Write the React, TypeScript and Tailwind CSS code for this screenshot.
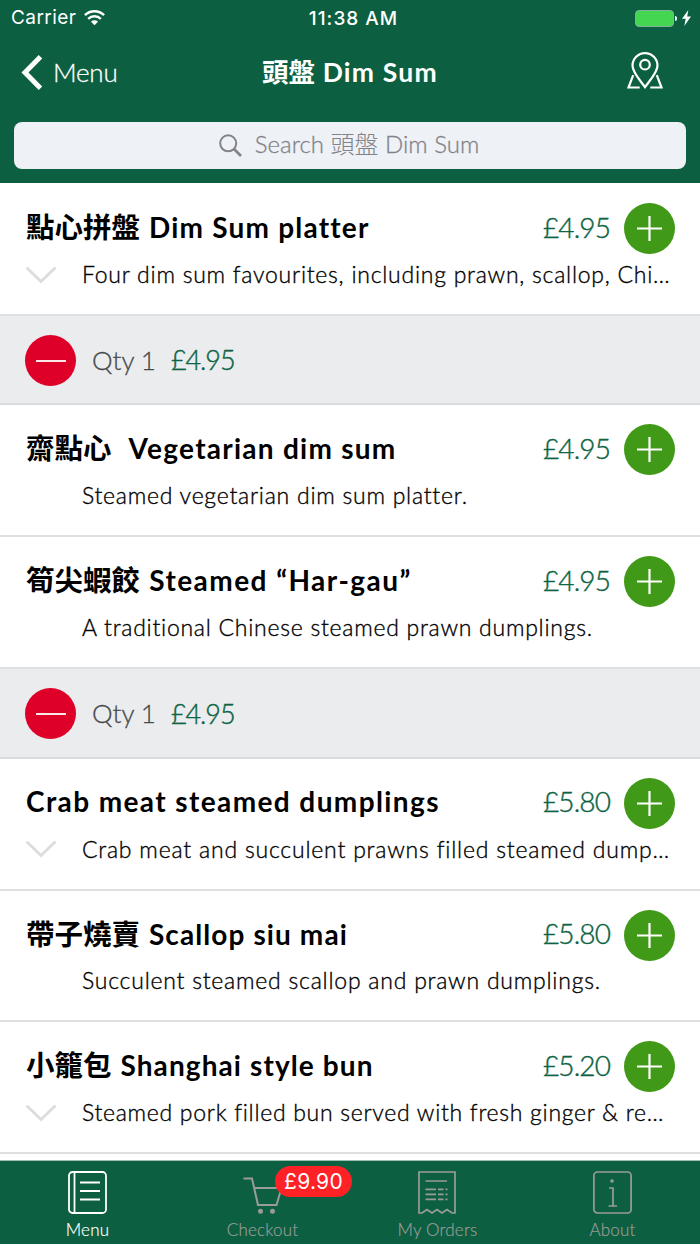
import React from 'react';
import { clsx } from 'clsx';

type Dish = {
  han?: string;
  name: string;
  nameClass: string;
  description: string;
  descriptionClass: string;
  price: string;
  expandable?: boolean;
  qty?: number;
};

const dishes: Dish[] = [
  {
    han: '點心拼盤',
    name: ' Dim Sum platter',
    nameClass: 'tracking-[1.2px]',
    description: 'Four dim sum favourites, including prawn, scallop, Chi…',
    descriptionClass: 'tracking-[0.75px]',
    price: '£4.95',
    expandable: true,
    qty: 1,
  },
  {
    han: '齋點心',
    name: '  Vegetarian dim sum',
    nameClass: 'tracking-[1.25px]',
    description: 'Steamed vegetarian dim sum platter.',
    descriptionClass: 'tracking-[0.75px]',
    price: '£4.95',
  },
  {
    han: '筍尖蝦餃',
    name: ' Steamed “Har-gau”',
    nameClass: 'tracking-[1.45px]',
    description: 'A traditional Chinese steamed prawn dumplings.',
    descriptionClass: 'tracking-[0.74px]',
    price: '£4.95',
    qty: 1,
  },
  {
    name: 'Crab meat steamed dumplings',
    nameClass: 'tracking-[1.4px]',
    description: 'Crab meat and succulent prawns filled steamed dump…',
    descriptionClass: 'tracking-[0.8px]',
    price: '£5.80',
    expandable: true,
  },
  {
    han: '帶子燒賣',
    name: ' Scallop siu mai',
    nameClass: 'tracking-[1.1px]',
    description: 'Succulent steamed scallop and prawn dumplings.',
    descriptionClass: 'tracking-[0.77px]',
    price: '£5.80',
  },
  {
    han: '小籠包',
    name: ' Shanghai style bun',
    nameClass: 'tracking-[1.1px]',
    description: 'Steamed pork filled bun served with fresh ginger & re…',
    descriptionClass: 'tracking-[0.71px]',
    price: '£5.20',
    expandable: true,
  },
];

const StatusBar = () => (
  <div className="grid h-9 grid-cols-3 items-center font-['Inter'] text-[19px] leading-none">
    <div className="flex items-center gap-2 pb-px pl-[11px]">
      <span className="tracking-[0.45px]">Carrier</span>
      <svg className="h-4 w-[21px]" viewBox="0 0 21 16" fill="none" stroke="currentColor" strokeWidth="2.4">
        <path d="M0.9 5.2a13.6 13.6 0 0 1 19.2 0" />
        <path d="M4.2 8.8a9 9 0 0 1 12.6 0" />
        <path d="M10.5 15.2 7 11.7a5 5 0 0 1 7 0z" fill="currentColor" stroke="none" />
      </svg>
    </div>
    <span className="pl-[7px] text-center font-medium tracking-[1px]">11:38 AM</span>
    <div className="flex items-center justify-end pr-[9px]">
      <div className="h-[17px] w-[39px] rounded-[4px] border border-[#7fb29d] bg-[#45d651]" />
      <div className="ml-px h-[5px] w-[2px] rounded-r-sm bg-white" />
      <svg className="ml-[5px] h-4 w-[9px]" viewBox="0 0 9 16" fill="currentColor">
        <path d="M6.3 0 0 8.8h3.7L2.3 16 9 6.5H5.2z" />
      </svg>
    </div>
  </div>
);

const NavBar = () => (
  <div className="grid h-[73px] grid-cols-3 items-center">
    <div className="flex items-center gap-[11px] pb-px pl-[21px]">
      <svg className="h-[35px] w-[21px]" viewBox="0 0 21 35" fill="none" stroke="currentColor" strokeWidth="5">
        <path d="M19.5 1.8 4 17.5l15.5 15.7" />
      </svg>
      <span className="text-[26px] font-light tracking-[-0.2px] [-webkit-text-stroke:0.3px]">Menu</span>
    </div>
    <h1 className="pb-0.5 text-center text-[26.5px] font-bold tracking-[1.2px] whitespace-nowrap">
      <span className="font-['Noto_Sans_CJK_TC',sans-serif] tracking-normal">頭盤</span> Dim Sum
    </h1>
    <div className="flex justify-end pr-[37px] pb-[4px]">
      <svg className="h-[37px] w-9" viewBox="0 0 36 37" fill="none" stroke="currentColor" strokeWidth="2.2">
        <path d="M18 35.2C12.5 27.5 5.5 20.5 5.5 13.6a12.5 12.5 0 0 1 25 0c0 6.9-7 13.9-12.5 21.6z" />
        <circle cx="18" cy="12.7" r="4.8" />
        <path d="M6.2 23.2 1.5 35.5h11.2M29.8 23.2l4.7 12.3H23.3" />
      </svg>
    </div>
  </div>
);

const SearchField = () => (
  <div className="mx-[14px] mt-[13px] flex h-[47px] items-center justify-center rounded-lg bg-[#eef1f6] pr-0.5 text-[#828388]">
    <svg className="mr-[13px] h-[23px] w-[23px]" viewBox="0 0 23 23" fill="none" stroke="currentColor" strokeWidth="2">
      <circle cx="9.2" cy="9.3" r="8" />
      <path d="m15 15 7 7" strokeWidth="2.6" />
    </svg>
    <span className="pb-1 text-[24px] font-light [-webkit-text-stroke:0.3px]">
      Search <span className="font-['Noto_Sans_CJK_TC',sans-serif] [-webkit-text-stroke:0px]">頭盤</span> Dim Sum
    </span>
  </div>
);

const DishRow = ({ dish }: { dish: Dish }) => (
  <>
    <div className="h-[131.8px] border-b-2 border-[#dedfe0] bg-white px-[26px]">
      <div className="flex h-[89px] items-center">
        <h2 className={clsx('flex-1 pb-1 text-[28px] font-bold whitespace-pre', dish.nameClass)}>
          {dish.han && (
            <span className="mr-px font-['Noto_Sans_CJK_TC',sans-serif] text-[28.5px] tracking-normal">{dish.han}</span>
          )}
          {dish.name}
        </h2>
        <span className="mr-[14px] pb-1 text-[28px] font-light tracking-[-0.9px] text-[#0c6443] [-webkit-text-stroke:0.4px]">
          {dish.price}
        </span>
        <button className="-mr-px flex h-[51px] w-[51px] items-center justify-center rounded-full bg-[#419a17] text-white">
          <svg className="h-[25px] w-[25px]" viewBox="0 0 25 25" stroke="currentColor" strokeWidth="2.2">
            <path d="M12.5 0v25M0 12.5h25" />
          </svg>
        </button>
      </div>
      <div className="-mt-[15px] flex h-8 items-center">
        <div className="w-14 shrink-0 pt-0.5">
          {dish.expandable && (
            <svg className="h-[17px] w-[30px]" viewBox="0 0 30 17" fill="none" stroke="#dcddde" strokeWidth="3" strokeLinecap="round">
              <path d="m1.5 1.5 13.5 13 13.5-13" />
            </svg>
          )}
        </div>
        <p className={clsx('text-[23px] font-light whitespace-nowrap [-webkit-text-stroke:0.35px]', dish.descriptionClass)}>
          {dish.description}
        </p>
      </div>
    </div>
    {dish.qty && (
      <div className="flex h-[89.7px] items-center border-b-2 border-[#dbdcde] bg-[#ebecee] pt-[2px] pl-[25px]">
        <button className="flex h-[51px] w-[51px] items-center justify-center rounded-full bg-[#df0029]">
          <span className="h-[2px] w-[30px] bg-white/90" />
        </button>
        <span className="ml-4 w-[79px] text-[26px] font-light text-[#48494b] [-webkit-text-stroke:0.3px]">Qty {dish.qty}</span>
        <span className="text-[27px] font-light tracking-[-1.1px] text-[#0c6443] [-webkit-text-stroke:0.4px]">{dish.price}</span>
      </div>
    )}
  </>
);

const MenuIcon = () => (
  <svg className="h-[43px] w-[39px]" viewBox="0 0 39 43" fill="none" stroke="currentColor" strokeWidth="1.8">
    <rect x="1" y="1" width="37" height="41" rx="3.5" />
    <path d="M6.5 1v41M12 11.5h20M12 20h20M12 28.5h20" />
  </svg>
);

const CartIcon = () => (
  <svg className="h-[43px] w-10" viewBox="0 0 40 43" fill="none" stroke="currentColor" strokeWidth="2">
    <path d="M0.5 7.500h8.500l6 26.500h18.500l5-17h-27.500" />
    <circle cx="17.5" cy="40.3" r="2.5" fill="currentColor" stroke="none" />
    <circle cx="29.5" cy="40.3" r="2.5" fill="currentColor" stroke="none" />
  </svg>
);

const ReceiptIcon = () => (
  <svg className="h-[43px] w-[39px]" viewBox="0 0 39 43" fill="none" stroke="currentColor" strokeWidth="1.7">
    <path d="M1 1h36v41h-3l-5-3.5-5 3.5-5-3.5-5 3.5-5-3.500L4 42H1z" />
    <path d="M7.500 10H29M7.500 18.300H18M7.500 23.300H18M7.500 28.300H18M20 18.300h5.500M20 23.300h5.500M20 28.300h5.500M27.500 18.300h2M27.500 23.300h2M27.500 28.300h2" />
  </svg>
);

const InfoIcon = () => (
  <svg className="h-[43px] w-[39px]" viewBox="0 0 39 43" fill="none" stroke="currentColor" strokeWidth="1.7">
    <rect x="0.9" y="1" width="37.2" height="41" rx="3.5" />
    <circle cx="19" cy="10" r="1.8" fill="currentColor" stroke="none" />
    <path d="M16 17h4v18M15.500 35H24" />
  </svg>
);

const tabs = [
  { label: 'Menu', icon: <MenuIcon />, active: true },
  { label: 'Checkout', icon: <CartIcon />, badge: '£9.90' },
  { label: 'My Orders', icon: <ReceiptIcon /> },
  { label: 'About', icon: <InfoIcon /> },
];

const TabBar = () => (
  <nav className="grid h-[84px] shrink-0 grid-cols-4 border-t border-[#9dbfb0] bg-[#0c5f40]">
    {tabs.map((tab) => (
      <div
        key={tab.label}
        className={clsx('relative flex flex-col items-center pt-[10px]', tab.active ? 'text-white' : 'text-[#9a9c9b]')}
      >
        {tab.icon}
        <span className="mt-1 text-[17px] leading-6 font-light tracking-[0.2px] [-webkit-text-stroke:0.2px]">{tab.label}</span>
        {tab.badge && (
          <span className="absolute top-[5px] left-[100px] flex h-[31px] w-[77px] items-center justify-center rounded-full bg-[#fe2125] font-['Inter'] text-[21px] tracking-[0.3px] text-white">
            {tab.badge}
          </span>
        )}
      </div>
    ))}
  </nav>
);

const App = () => {
  return (
    <div className="flex h-[1244px] w-[700px] flex-col overflow-hidden bg-white font-['Lato','Noto_Sans_CJK_TC',sans-serif] text-black">
      <header className="h-[183px] shrink-0 bg-[#0c5f40] text-white">
        <StatusBar />
        <NavBar />
        <SearchField />
      </header>
      <main className="min-h-0 flex-1 overflow-hidden pt-px">
        {dishes.map((dish) => (
          <DishRow key={dish.description} dish={dish} />
        ))}
      </main>
      <TabBar />
    </div>
  );
};

export default App;
